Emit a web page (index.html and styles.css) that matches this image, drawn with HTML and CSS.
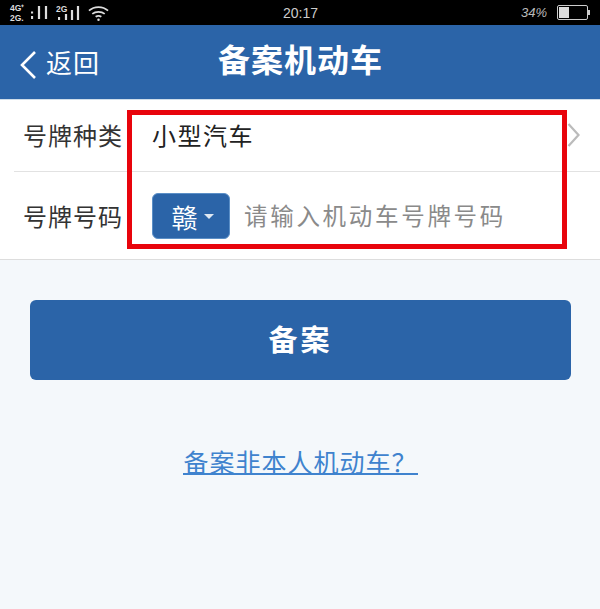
FILE: index.html
```html
<!DOCTYPE html>
<html lang="zh-CN">
<head>
    <meta charset="UTF-8">
    <meta name="viewport" content="width=device-width, initial-scale=1.0">
    <title>备案机动车</title>
    <link rel="stylesheet" href="styles.css">
</head>
<body>

    <div class="statusbar">
        <div class="status-left">
            <div class="net-label"><span>4G⁺</span><span>2G.</span></div>
            <svg class="signal" width="20" height="16" viewBox="0 0 20 16">
                <path d="M1 6.500v2M1 11v3M8 1v13M15 1v13" stroke="#ddd" stroke-width="2.200" fill="none"/>
            </svg>
            <div class="net-label net-single"><span>2G</span></div>
            <svg class="signal signal-two" width="22" height="16" viewBox="0 0 22 16">
                <path d="M1 12v3M8 9v6M14 5v10M20 1v14" stroke="#ddd" stroke-width="2.200" fill="none"/>
            </svg>
            <svg class="wifi" width="21" height="16" viewBox="0 0 22 16">
                <path d="M1 5.500C6.500.500 15.500.500 21 5.500M4.500 9C8 6 14 6 17.500 9M8 12c1.800-1.300 4.200-1.300 6 0" stroke="#ddd" stroke-width="1.800" fill="none"/>
                <circle cx="11" cy="15" r="1.300" fill="#ddd"/>
            </svg>
        </div>
        <div class="status-time">20:17</div>
        <div class="status-right">
            <span class="battery-text">34%</span>
            <div class="battery"><div class="battery-level"></div></div>
            <div class="battery-tip"></div>
        </div>
    </div>

    <header>
        <a class="back" href="#">
            <svg width="18" height="30" viewBox="0 0 18 30">
                <path d="M16 2L3 15l13 13" stroke="#fff" stroke-width="2.600" fill="none"/>
            </svg>
            <span>返回</span>
        </a>
        <h1>备案机动车</h1>
    </header>

    <section class="form">
        <div class="row row-first">
            <label>号牌种类</label>
            <span class="value">小型汽车</span>
            <svg class="chevron" width="14" height="26" viewBox="0 0 14 26">
                <path d="M1.500 2l10 11-10 11" stroke="#bbb" stroke-width="2.200" fill="none"/>
            </svg>
        </div>
        <div class="row">
            <label>号牌号码</label>
            <div class="province">赣<i class="caret"></i></div>
            <span class="placeholder">请输入机动车号牌号码</span>
        </div>
        <div class="highlight"></div>
    </section>

    <div class="actions">
        <button>备案</button>
        <a class="link" href="#">备案非本人机动车？</a>
    </div>

</body>
</html>
```

FILE: styles.css
```css
* {
    margin: 0;
    padding: 0;
    box-sizing: border-box;
}

body {
    font-family: "Noto Sans CJK SC", "Noto Sans", sans-serif;
    background-color: #f4f8fb;
    color: #333;
    width: 600px;
    height: 609px;
    overflow: hidden;
}

.statusbar {
    height: 25px;
    background-color: #000;
    color: #ddd;
    display: grid;
    grid-template-columns: 1fr auto 1fr;
    align-items: center;
    padding: 0 9px 0 10px;
}

.status-left {
    display: flex;
    align-items: center;
    gap: 2px;
}

.net-label {
    display: flex;
    flex-direction: column;
    width: 19px;
    font-family: "Liberation Sans", sans-serif;
    font-size: 8.500px;
    font-weight: bold;
    line-height: 10px;
}

.net-single {
    width: 13px;
    margin-left: 3px;
    padding-bottom: 7px;
    font-size: 8.500px;
}

.signal-two {
    margin-left: -13px;
    margin-top: 1px;
}

.wifi {
    margin-left: 6px;
}

.status-time {
    font-family: "Liberation Sans", sans-serif;
    font-size: 14px;
    color: #ccc;
}

.status-right {
    display: flex;
    align-items: center;
    justify-content: flex-end;
    padding-right: 1px;
}

.battery-text {
    font-family: "Liberation Sans", sans-serif;
    font-style: italic;
    font-size: 13px;
    color: #bbb;
    margin-right: 10px;
}

.battery {
    width: 31px;
    height: 15px;
    border: 1px solid #ccc;
    border-radius: 2px;
    padding: 1px;
}

.battery-level {
    width: 10px;
    height: 100%;
    background-color: #ddd;
}

.battery-tip {
    width: 2px;
    height: 5px;
    background-color: #ccc;
}

header {
    height: 74px;
    background-color: #2b64a8;
    color: #fff;
    position: relative;
    display: flex;
    align-items: center;
    justify-content: center;
    padding-bottom: 8px;
}

header h1 {
    font-size: 32px;
    font-weight: 700;
    letter-spacing: 1px;
    margin-left: 1px;
}

.back {
    position: absolute;
    left: 19px;
    top: 22px;
    display: flex;
    align-items: center;
    gap: 9px;
    color: #fff;
    text-decoration: none;
    font-size: 26px;
    line-height: 30px;
    letter-spacing: 1px;
}

.back span {
    padding-bottom: 5px;
}

.form {
    background-color: #fff;
    position: relative;
    border-top: 1px solid #cfdde9;
    border-bottom: 1px solid #ddd;
    height: 161px;
}

.row {
    height: 80px;
    margin-left: 14px;
    padding-left: 9px;
    display: flex;
    align-items: center;
    font-size: 24px;
    padding-top: 8px;
}

.row-first {
    height: 72px;
    border-bottom: 1px solid #e2e2e2;
    padding-top: 0;
}

.row label {
    width: 129px;
    flex: none;
    color: #333;
    letter-spacing: 1px;
    padding-bottom: 2px;
}

.value {
    color: #222;
    letter-spacing: 1.500px;
    padding-bottom: 3px;
}

.chevron {
    margin-left: auto;
    margin-right: 19px;
    margin-bottom: 2px;
}

.province {
    width: 78px;
    height: 46px;
    flex: none;
    background-color: #2b64a8;
    border: 1px solid #5b8fc7;
    border-radius: 6px;
    color: #fff;
    display: flex;
    align-items: center;
    justify-content: center;
    gap: 6px;
    font-size: 26px;
    padding-left: 3px;
}

.caret {
    width: 0;
    height: 0;
    border-left: 5px solid transparent;
    border-right: 5px solid transparent;
    border-top: 5px solid #dfe8f2;
}

.placeholder {
    margin-left: 14px;
    color: #8a8a8a;
    font-size: 23.500px;
    letter-spacing: 2.700px;
    white-space: nowrap;
    padding-bottom: 2px;
}

/* marca roja sobre el formulario */
.highlight {
    position: absolute;
    left: 127px;
    top: 10px;
    width: 440px;
    height: 139px;
    border: 5px solid #e8040c;
}

.actions {
    display: flex;
    flex-direction: column;
    align-items: center;
    padding: 40px 29px 0 30px;
}

button {
    width: 100%;
    height: 80px;
    background-color: #2b64a8;
    color: #fff;
    border: none;
    border-radius: 6px;
    font-family: inherit;
    font-size: 29px;
    font-weight: 700;
    letter-spacing: 3px;
    padding-bottom: 4px;
}

.link {
    margin-top: 70px;
    color: #3f83ce;
    font-size: 25px;
    line-height: 23px;
    letter-spacing: 1px;
    text-decoration: none;
    border-bottom: 2px solid #3f83ce;
}
```
